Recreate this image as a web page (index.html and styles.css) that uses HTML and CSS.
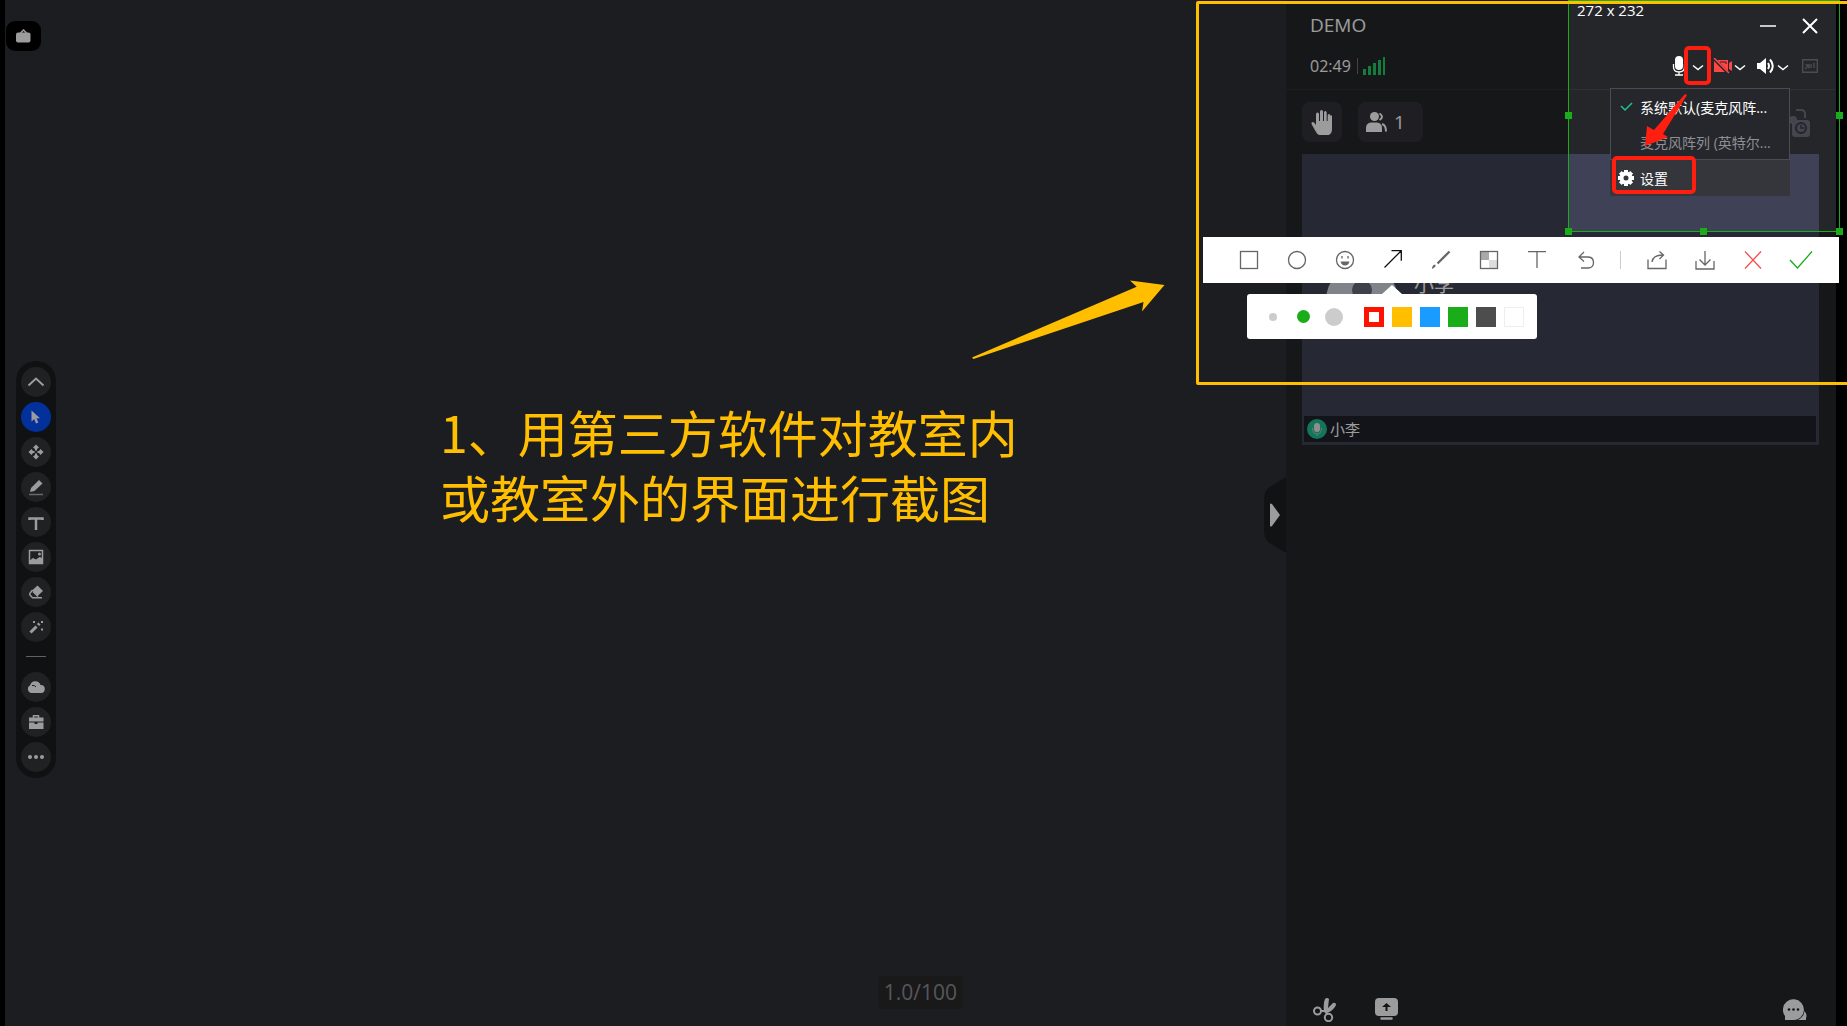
FILE: index.html
```
<!DOCTYPE html>
<html lang="zh-CN">

<head>
    <meta charset="UTF-8">
    <meta name="viewport" content="width=device-width, initial-scale=1.0">
    <title>DEMO</title>
    <link rel="stylesheet" href="styles.css">
</head>

<body>
    <div class="app">
        <main class="board">
            <button class="bag-btn" aria-label="课件">
                <svg width="15" height="14" viewBox="0 0 15 14"><path d="M4.500 4 7.500 1l3 3" fill="none" stroke="currentColor" stroke-width="1.500"/><rect y="3.500" width="14.500" height="10" rx="2" fill="currentColor"/></svg>
            </button>

            <nav class="tools">
                <button aria-label="收起"><svg width="18" height="18" viewBox="0 0 18 18"><path d="M1.500 12.500 9 5.500l7.500 7" fill="none" stroke="currentColor" stroke-width="2"/></svg></button>
                <button class="active" aria-label="选择"><svg width="18" height="18" viewBox="0 0 18 18"><path d="M4.500 2.500v11l2.700-2.500 1.800 4.500 2.300-1-1.800-4.200h3.500z" fill="currentColor"/></svg></button>
                <button aria-label="移动"><svg width="18" height="18" viewBox="0 0 18 18"><path d="M9 1.500l3 3-2 1.500v1.500H8V6L6 4.500zM9 16.500l3-3-2-1.500v-1.500H8V12l-2 1.500zM1.500 9l3-3L6 8h1.500v2H6l-1.500 2zM16.500 9l-3-3L12 8h-1.500v2H12l1.500 2z" fill="currentColor"/></svg></button>
                <button aria-label="画笔"><svg width="18" height="18" viewBox="0 0 18 18"><path d="M3 14l1-4 8-8 3.500 3.500-8 7.500z" fill="currentColor"/><path d="M2 16.500h14" stroke="currentColor" stroke-width="1.500" opacity=".6"/></svg></button>
                <button aria-label="文字"><svg width="18" height="18" viewBox="0 0 18 18"><path d="M2.500 7V5.500h13V7M9 6v11" fill="none" stroke="currentColor" stroke-width="2.500"/></svg></button>
                <button aria-label="图片"><svg width="18" height="18" viewBox="0 0 18 18"><rect x="2.500" y="2.500" width="13" height="13" fill="none" stroke="currentColor" stroke-width="1.500"/><circle cx="12.500" cy="6" r="1.500" fill="currentColor"/><path d="M2 13l4-3 3 1.500 3.500-2.500 3 1v5.500H2z" fill="currentColor"/></svg></button>
                <button aria-label="橡皮"><svg width="18" height="18" viewBox="0 0 18 18"><path d="M10.500 2.500l5.500 5.500-5.500 5L5 7.500z" fill="currentColor"/><path d="M5.500 7L3 10.200q-.8 1 .2 2l2.300 2.500H15M6 8.500l5 5" fill="none" stroke="currentColor" stroke-width="1.500"/></svg></button>
                <button aria-label="魔法笔"><svg width="18" height="18" viewBox="0 0 18 18"><path d="M3.500 14.500l6-6M11 7l1.500-1.500" stroke="currentColor" stroke-width="3" /><path d="M6 3h2v2H6zM14 3h2v2h-2zM14 10.500h2v2h-2z" fill="currentColor"/></svg></button>
                <hr>
                <button aria-label="云盘"><svg width="18" height="18" viewBox="0 0 18 18"><path d="M4.500 15A4 4 0 0 1 3 7.500 5.500 5.500 0 0 1 13.500 7a4 4 0 0 1 .5 8z" fill="currentColor"/><path d="M5 7.500q3-.5 4 1.500" fill="none" stroke="#35363a"/></svg></button>
                <button aria-label="工具箱"><svg width="18" height="18" viewBox="0 0 18 18"><path d="M6.500 5V2.800h5V5" fill="none" stroke="currentColor" stroke-width="1.500"/><path d="M2 4.500h14.500v4H2zM2 9.500h5.500v1.500h3V9.500h6V16H2z" fill="currentColor"/></svg></button>
                <button aria-label="更多"><svg width="18" height="18" viewBox="0 0 18 18"><g fill="currentColor"><circle cx="3" cy="9" r="2"/><circle cx="9" cy="9" r="2"/><circle cx="15" cy="9" r="2"/></g></svg></button>
            </nav>

            <span class="page-no">1.0/100</span>

            <button class="collapse" aria-label="收起侧栏">
                <svg width="10" height="24" viewBox="0 0 10 24"><path d="M0 1q0-1 2 0l8 11-8 11q-2 1-2 0z" fill="currentColor"/></svg>
            </button>
        </main>

        <aside class="side">
            <header class="side-head">
                <div class="title-row">
                    <h1>DEMO</h1>
                    <div class="win-btns">
                        <button aria-label="最小化"><svg width="16" height="16" viewBox="0 0 16 16"><path d="M0 8h16" stroke="#fff" stroke-width="1.500"/></svg></button>
                        <button aria-label="关闭"><svg width="16" height="16" viewBox="0 0 16 16"><path d="M1 1l14 14M15 1L1 15" stroke="#fff" stroke-width="2"/></svg></button>
                    </div>
                </div>
                <div class="status-row">
                    <time>02:49</time>
                    <span class="bar"></span>
                    <svg class="signal" width="22" height="18" viewBox="0 0 22 18"><path d="M0 12h3v6H0zM5 9h3v9H5zM10 6h3v12h-3zM15 3h3v15h-3zM20 0h2v18h-2z" fill="currentColor"/></svg>
                    <div class="devices">
                        <button class="mic" aria-label="麦克风"><svg width="14" height="20" viewBox="0 0 14 20"><rect x="3" y="0" width="8" height="14" rx="4" fill="currentColor"/><path d="M1.500 8v3q0 5 5.500 5t5.500-5V8M7 16v3M3 19h8" fill="none" stroke="currentColor" stroke-width="1.300"/></svg></button>
                        <button class="more" aria-label="选择麦克风"><svg width="12" height="8" viewBox="0 0 12 8"><path d="M1 1.500l5 4 5-4" fill="none" stroke="currentColor" stroke-width="1.500"/></svg></button>
                        <button class="cam" aria-label="摄像头"><svg width="20" height="16" viewBox="0 0 20 16"><path d="M1 2h14v12H1zM16 5l3-2v10l-3-2z" fill="#ff4646"/><path d="M7 4h6v2" fill="none" stroke="#242529"/><path d="M0 0l16 16" stroke="#242529" stroke-width="3"/><path d="M1 0l15 15" stroke="#ff4646" stroke-width="1.500"/></svg></button>
                        <button class="more" aria-label="选择摄像头"><svg width="12" height="8" viewBox="0 0 12 8"><path d="M1 1.500l5 4 5-4" fill="none" stroke="currentColor" stroke-width="1.500"/></svg></button>
                        <button class="speaker" aria-label="扬声器"><svg width="18" height="16" viewBox="0 0 18 16"><path d="M0 5h3l6-5v16l-6-5H0z" fill="currentColor"/><path d="M11 5q2 3 0 6M13 1.500q5.500 6.500 0 13" fill="none" stroke="currentColor" stroke-width="2"/></svg></button>
                        <button class="more" aria-label="选择扬声器"><svg width="12" height="8" viewBox="0 0 12 8"><path d="M1 1.500l5 4 5-4" fill="none" stroke="currentColor" stroke-width="1.500"/></svg></button>
                        <button class="shrink" aria-label="缩小"><svg width="16" height="14" viewBox="0 0 16 14"><path d="M.7.7h14.600v12.600H.7zM3 10l4-4M3.500 6H7v3.500M9 9V5M12 9V4" fill="none" stroke="currentColor" stroke-width="1.400"/></svg></button>
                    </div>
                </div>
            </header>

            <div class="actions">
                <button class="chip hand" aria-label="举手">
                    <svg width="22" height="25" viewBox="0 0 22 25"><path d="M8 25q-2-1-3-3L.5 14Q0 12 2 12q1 0 3 3V4q0-1.500 1.500-1.500T8 4v7h1V1.500Q9 0 10.500 0T12 1.500V11h1V2.500Q13 1 14.300 1t1.400 1.500V11h1V5.500q0-1.500 1.300-1.500t1.400 1.500H21V20q0 3-3 5z" fill="currentColor"/></svg>
                </button>
                <button class="chip members" aria-label="成员">
                    <svg width="22" height="20" viewBox="0 0 22 20"><circle cx="8.500" cy="4.500" r="4.500" fill="currentColor"/><path d="M0 20v-4q0-5 5-5.500h6q5 .5 5 5.500v4z" fill="currentColor"/><path d="M13.500 1.500q5 3 0 6.500M16 12q4 1 4 7.500" fill="none" stroke="currentColor" stroke-width="2"/></svg>
                    <span>1</span>
                </button>
                <svg class="cam-switch" width="28" height="30" viewBox="0 0 28 30"><path d="M14 2h5q4 0 4 4v4M0 10h8M2 18h4" fill="none" stroke="currentColor" stroke-width="2"/><circle cx="11" cy="12" r="4" fill="currentColor"/><rect x="10" y="12" width="18" height="17" rx="3" fill="currentColor"/><circle cx="19" cy="20" r="5" fill="none" stroke="#242529" stroke-width="2"/><path d="M19 17v3h3" fill="none" stroke="#242529" stroke-width="1.500"/></svg>
            </div>

            <section class="video">
                <div class="person">
                    <svg width="72" height="72" viewBox="0 0 72 72"><circle cx="36" cy="36" r="36" fill="#d2d6de"/><circle cx="36" cy="26" r="10" fill="#666a7a"/><path d="M16 56q0-18 20-18t20 18z" fill="#666a7a"/></svg>
                    <span>小李</span>
                </div>
                <div class="name-bar">
                    <svg width="20" height="20" viewBox="0 0 20 20"><circle cx="10" cy="10" r="10" fill="#1fbf92"/><rect x="7" y="4" width="6" height="9" rx="3" fill="#e8e8e8"/><path d="M5.500 9q0 6 4.500 6t4.500-6M10 15v2" fill="none" stroke="#b0c8c0"/></svg>
                    <span>小李</span>
                </div>
            </section>

            <footer class="side-foot">
                <button aria-label="截图"><svg width="24" height="24" viewBox="0 0 24 24"><path d="M11 14Q10 5 12 1q2-2 4 0l-1 9 5-5q3-1 3 2-2 5-9 8z" fill="currentColor"/><g fill="none" stroke="currentColor" stroke-width="2"><circle cx="4.500" cy="13" r="3.500"/><circle cx="15.500" cy="19.500" r="3.700"/><path d="M8 13h4l2 3"/></g></svg></button>
                <button aria-label="共享屏幕"><svg width="24" height="24" viewBox="0 0 24 24"><rect width="23" height="18" rx="4" fill="currentColor"/><path d="M11.500 13V7" stroke="#222" stroke-width="2"/><path d="M7 9l4.500-4L16 9z" fill="#222"/><path d="M6.500 20.500h10" stroke="currentColor" stroke-width="2.500" stroke-linecap="round"/></svg></button>
                <button class="chat" aria-label="聊天"><svg width="24" height="24" viewBox="0 0 24 24"><path d="M2 22v-4a10.500 10.500 0 1 1 15.500 1.500Q14 22 11 22zM15 22q6-3 6.500-9 3 4 1.500 7v2z" fill="currentColor"/><g fill="#222"><circle cx="6" cy="11.500" r="1.300"/><circle cx="10.500" cy="11.500" r="1.300"/><circle cx="15" cy="11.500" r="1.300"/></g></svg></button>
            </footer>

            <div class="mic-menu">
                <div class="mic-list">
                    <button class="chosen">
                        <svg width="16" height="12" viewBox="0 0 16 12"><path d="M3 5l4 4 7-7" fill="none" stroke="#1fc390" stroke-width="1.500"/></svg>
                        系统默认(麦克风阵...
                    </button>
                    <button>
                        <i></i>
                        麦克风阵列 (英特尔...
                    </button>
                </div>
                <button class="setting">
                    <svg width="16" height="16" viewBox="0 0 16 16"><circle cx="8" cy="8" r="4.500" fill="none" stroke="#fff" stroke-width="4"/><path d="M8 0v3M8 13v3M0 8h3M13 8h3M2.300 2.300l2 2M11.700 11.700l2 2M13.700 2.300l-2 2M4.300 11.700l-2 2" stroke="#fff" stroke-width="4"/></svg>
                    设置
                </button>
            </div>
        </aside>
    </div>

    <!-- selected area, everything outside is dimmed -->
    <div class="selection">
        <span class="size">272 x 232</span>
        <i class="dot left-mid"></i>
        <i class="dot right-mid"></i>
        <i class="dot left-bottom"></i>
        <i class="dot mid-bottom"></i>
        <i class="dot right-bottom"></i>
        <span class="red-box red-arrow-btn"></span>
        <span class="red-box red-setting"></span>
        <svg class="red-arrow" width="46" height="54" viewBox="0 0 46 54"><path d="M44 0l2 1-24 39 5 3L4 52 6 32l7 4z" fill="#ff1e10"/></svg>
    </div>

    <div class="shot-bar">
        <button aria-label="矩形"><svg width="20" height="20" viewBox="0 0 20 20"><rect x="1.500" y="1.500" width="17" height="17"/></svg></button>
        <button aria-label="椭圆"><svg width="20" height="20" viewBox="0 0 20 20"><circle cx="10" cy="10" r="8.500"/></svg></button>
        <button aria-label="表情"><svg width="20" height="20" viewBox="0 0 20 20"><circle cx="10" cy="10" r="8.500"/><path d="M5.500 11.500h9q-1 4-4.500 4t-4.500-4z" fill="#666" stroke="none"/><path d="M7 6v2.500M13 6v2.500"/></svg></button>
        <button class="current" aria-label="箭头"><svg width="20" height="20" viewBox="0 0 20 20"><path d="M1.500 17.500l17-17M8.500.700h9.800v10"/></svg></button>
        <button aria-label="画笔"><svg width="20" height="20" viewBox="0 0 20 20"><path d="M6.500 13.500l12-12" stroke-width="2.300"/><path d="M1 19q0-4 3-4.500 2 2-3 4.500z" fill="#666" stroke="none"/></svg></button>
        <button aria-label="马赛克"><svg width="20" height="20" viewBox="0 0 20 20"><path d="M2 2h8v8H2z" fill="#aaa" stroke="none"/><path d="M10 10h8v8h-8z" fill="#ddd" stroke="none"/><rect x="1.500" y="1.500" width="17" height="17"/></svg></button>
        <button aria-label="文字"><svg width="20" height="20" viewBox="0 0 20 20"><path d="M1 1.700h18M10 1.700V18"/></svg></button>
        <button aria-label="撤销"><svg width="20" height="20" viewBox="0 0 20 20"><path d="M9 2L4 7l5 4.500M4 7h9.500q5 .5 5 5.500t-5 5.500H6"/></svg></button>
        <span class="sep"></span>
        <button aria-label="分享"><svg width="20" height="20" viewBox="0 0 20 20"><path d="M1 9.500v9h18v-9M5 12q1-7 10.500-7M12.500 1.500L16.500 5l-4 4"/></svg></button>
        <button aria-label="下载"><svg width="20" height="20" viewBox="0 0 20 20"><path d="M1 11v8h18v-8M10 1v14M4.500 9.500L10 15l5.500-5.500"/></svg></button>
        <button class="cancel" aria-label="取消"><svg width="20" height="20" viewBox="0 0 20 20"><path d="M2 1.500l16 17M18 1.500l-16 17"/></svg></button>
        <button class="ok" aria-label="完成"><svg width="24" height="20" viewBox="0 0 24 20"><path d="M1 10l7.500 8L23 1.500"/></svg></button>
    </div>

    <div class="pen-pop">
        <button class="size-s" aria-label="细"></button>
        <button class="size-m" aria-label="中"></button>
        <button class="size-l" aria-label="粗"></button>
        <div class="colors">
            <button class="red" aria-label="红"></button>
            <button class="yellow" aria-label="黄"></button>
            <button class="blue" aria-label="蓝"></button>
            <button class="green" aria-label="绿"></button>
            <button class="gray" aria-label="灰"></button>
            <button class="white" aria-label="白"></button>
        </div>
    </div>

    <!-- notes drawn on top -->
    <div class="note-frame"></div>
    <svg class="note-arrow" width="194" height="80" viewBox="0 0 194 80"><path d="M0 77.500L164.700 6.700 158 .5 192.500 5 170 31.500 171.500 22 1.500 79z" fill="#ffbe00"/></svg>
    <p class="note-text">1、用第三方软件对教室内<br>或教室外的界面进行截图</p>
</body>

</html>
```

FILE: styles.css
```
* {
    margin: 0;
    padding: 0;
    box-sizing: border-box;
}

body {
    position: relative;
    min-height: 100vh;
    overflow: hidden;
    font-family: "Open Sans", "Noto Sans CJK SC", sans-serif;
    background-color: #000;
    color: #fff;
}

button {
    border: none;
    background: none;
    color: inherit;
    font: inherit;
    cursor: pointer;
}

svg {
    display: block;
    flex-shrink: 0;
}

.app {
    display: flex;
    height: 100vh;
    padding: 0 11px 0 5px;
}

/* whiteboard */
.board {
    position: relative;
    flex: 1;
    background-color: #2e3035;
}

.bag-btn {
    position: absolute;
    left: 1px;
    top: 21px;
    display: flex;
    align-items: center;
    justify-content: center;
    width: 35px;
    height: 30px;
    border-radius: 9px;
    background-color: #000;
}

.tools {
    position: absolute;
    left: 11px;
    top: 361px;
    display: flex;
    flex-direction: column;
    align-items: center;
    gap: 5px;
    width: 40px;
    padding: 6px 0;
    border-radius: 20px;
    background-color: #1b1c1e;
}

.tools button {
    display: flex;
    align-items: center;
    justify-content: center;
    width: 30px;
    height: 30px;
    border-radius: 50%;
    background-color: #35363a;
}

.tools .active {
    background-color: #0550ff;
}

.tools hr {
    width: 20px;
    height: 1px;
    margin: 9px 0 10px;
    border: none;
    background-color: #a0a0a0;
}

.page-no {
    position: absolute;
    right: 323px;
    bottom: 17px;
    padding: 0 6px;
    border-radius: 4px;
    background-color: #2a2a2c;
    color: #8c8e94;
    font-size: 21px;
    line-height: 33px;
}

.collapse {
    position: absolute;
    right: 0;
    top: 477px;
    display: flex;
    align-items: center;
    width: 22px;
    height: 76px;
    padding-left: 6px;
    background-color: #1d1e20;
    clip-path: polygon(0 28%, 5% 20%, 20% 14%, 100% 0, 100% 100%, 20% 86%, 5% 80%, 0 72%);
}

/* side panel */
.side {
    position: relative;
    display: flex;
    flex-direction: column;
    width: 550px;
    background-color: #252629;
}

.side-head {
    height: 90px;
    padding: 12px 18px 0 24px;
    border-bottom: 1px solid #2f3034;
}

.title-row {
    display: flex;
    align-items: center;
    justify-content: space-between;
    height: 27px;
}

.title-row h1 {
    font-size: 19px;
    font-weight: normal;
    line-height: 24px;
    padding-bottom: 2px;
}

.win-btns {
    display: flex;
    gap: 26px;
}

.status-row {
    display: flex;
    align-items: center;
    height: 54px;
    font-size: 16px;
}

.bar {
    width: 1px;
    height: 16px;
    margin: 0 5px 0 6px;
    background-color: #6c6e76;
}

.signal {
    color: #20cc66;
}

.devices {
    display: flex;
    align-items: center;
    margin-left: auto;
}

.more {
    margin: 4px 9px 0 6px;
}

.cam + .more {
    margin-left: 1px;
}

.speaker {
    margin-left: 2px;
}

.speaker + .more {
    margin: 4px 13px 0 2px;
}

.shrink {
    color: #4a4c53;
}

.actions {
    display: flex;
    gap: 16px;
    padding: 12px 16px;
}

.chip {
    display: flex;
    align-items: center;
    justify-content: center;
    height: 40px;
    border-radius: 8px;
    background-color: #33343a;
    font-size: 19px;
}

.hand {
    width: 40px;
}

.members {
    gap: 6px;
    width: 65px;
    padding-right: 10px;
}

.cam-switch {
    margin: 6px 10px 0 auto;
    color: #43464f;
}

.video {
    display: flex;
    flex-direction: column;
    justify-content: space-between;
    height: 291px;
    margin: 0 17px 0 16px;
    padding: 0 3px 3px 2px;
    background-color: #3f4256;
}

.person {
    display: flex;
    gap: 16px;
    padding: 110px 0 0 22px;
    font-size: 20px;
    line-height: 42px;
}

.name-bar {
    display: flex;
    align-items: center;
    gap: 3px;
    height: 26px;
    padding-left: 3px;
    background-color: #20212a;
    font-size: 15px;
    line-height: 22px;
}

.side-foot {
    display: flex;
    gap: 38px;
    margin-top: auto;
    padding: 0 29px 4px 27px;
}

.chat {
    margin-left: auto;
}

.mic-menu {
    position: absolute;
    right: 46px;
    top: 88px;
    width: 180px;
    background-color: #34363c;
    font-size: 14px;
}

.mic-menu button {
    display: flex;
    align-items: center;
    gap: 6px;
    width: 100%;
    height: 35px;
    padding-left: 7px;
    white-space: nowrap;
}

.mic-list {
    border: 1px solid #494c52;
    background-color: #25272c;
    color: #8d8f94;
}

.mic-list i {
    width: 16px;
}

.mic-list .chosen {
    color: #fff;
}

.mic-menu .setting {
    height: 36px;
    padding-left: 8px;
}

/* screenshot selection */
.selection {
    position: absolute;
    right: 7px;
    top: 0;
    width: 272px;
    height: 232px;
    border: 1px solid #1aad19;
    box-shadow: 0 0 0 4000px rgba(0, 0, 0, .39);
}

.size {
    position: absolute;
    left: 8px;
    top: 0;
    font-size: 15px;
    line-height: 18px;
}

.dot {
    position: absolute;
    width: 7px;
    height: 7px;
    background-color: #1aad19;
}

.left-mid {
    left: -4px;
    top: 111px;
}

.right-mid {
    right: -4px;
    top: 111px;
}

.left-bottom {
    left: -4px;
    bottom: -4px;
}

.mid-bottom {
    left: 131px;
    bottom: -4px;
}

.right-bottom {
    right: -4px;
    bottom: -4px;
}

.red-box {
    position: absolute;
    border: 4px solid #ff1e10;
    border-radius: 5px;
}

.red-arrow-btn {
    left: 115px;
    top: 45px;
    width: 27px;
    height: 39px;
}

.red-setting {
    left: 43px;
    top: 155px;
    width: 84px;
    height: 38px;
}

.red-arrow {
    position: absolute;
    left: 72px;
    top: 93px;
}

.shot-bar {
    position: absolute;
    right: 8px;
    top: 237px;
    display: flex;
    align-items: center;
    width: 636px;
    height: 46px;
    padding-left: 22px;
    background-color: #fff;
}

.shot-bar button {
    display: flex;
    align-items: center;
    justify-content: center;
    width: 48px;
    height: 46px;
}

.shot-bar svg {
    fill: none;
    stroke: #666;
    stroke-width: 1.3;
}

.shot-bar .current svg {
    stroke: #111;
}

.shot-bar .cancel svg {
    stroke: #fa4b4b;
}

.shot-bar .ok svg {
    stroke: #1aad19;
}

.sep {
    width: 1px;
    height: 18px;
    margin: 0 12px 0 11px;
    background-color: #ccc;
}

.pen-pop {
    position: absolute;
    right: 310px;
    top: 294px;
    display: flex;
    align-items: center;
    width: 290px;
    height: 45px;
    padding: 0 13px 0 22px;
    border-radius: 3px;
    background-color: #fff;
}

.pen-pop::before {
    content: "";
    position: absolute;
    left: 135px;
    top: -9px;
    border: 10px solid transparent;
    border-top: none;
    border-bottom: 9px solid #fff;
}

.pen-pop button {
    border-radius: 50%;
    background-color: #ccc;
}

.size-s {
    width: 8px;
    height: 8px;
}

.pen-pop .size-m {
    width: 13px;
    height: 13px;
    margin: 0 15px 0 20px;
    background-color: #1aad19;
}

.size-l {
    width: 18px;
    height: 18px;
}

.colors {
    display: flex;
    gap: 8px;
    margin-left: auto;
}

.pen-pop .colors button {
    width: 20px;
    height: 20px;
    border-radius: 0;
}

.pen-pop .colors .red {
    border: 5px solid #ff1200;
    background-color: #fff;
}

.pen-pop .colors .yellow {
    background-color: #ffbe00;
}

.pen-pop .colors .blue {
    background-color: #1a9bff;
}

.pen-pop .colors .green {
    background-color: #1aad19;
}

.pen-pop .colors .gray {
    background-color: #4d4d4d;
}

.pen-pop .colors .white {
    border: 1px solid #eee;
    background-color: #fff;
}

/* notes */
.note-frame {
    position: absolute;
    right: -4px;
    top: 1px;
    width: 655px;
    height: 384px;
    border: 3px solid #ffbe00;
    border-radius: 2px;
    pointer-events: none;
}

.note-arrow {
    position: absolute;
    right: 681px;
    top: 280px;
}

.note-text {
    position: absolute;
    left: 440px;
    top: 399px;
    color: #ffbe00;
    font-family: "Noto Sans CJK SC", sans-serif;
    font-size: 50px;
    font-weight: 400;
    line-height: 65px;
}
```
